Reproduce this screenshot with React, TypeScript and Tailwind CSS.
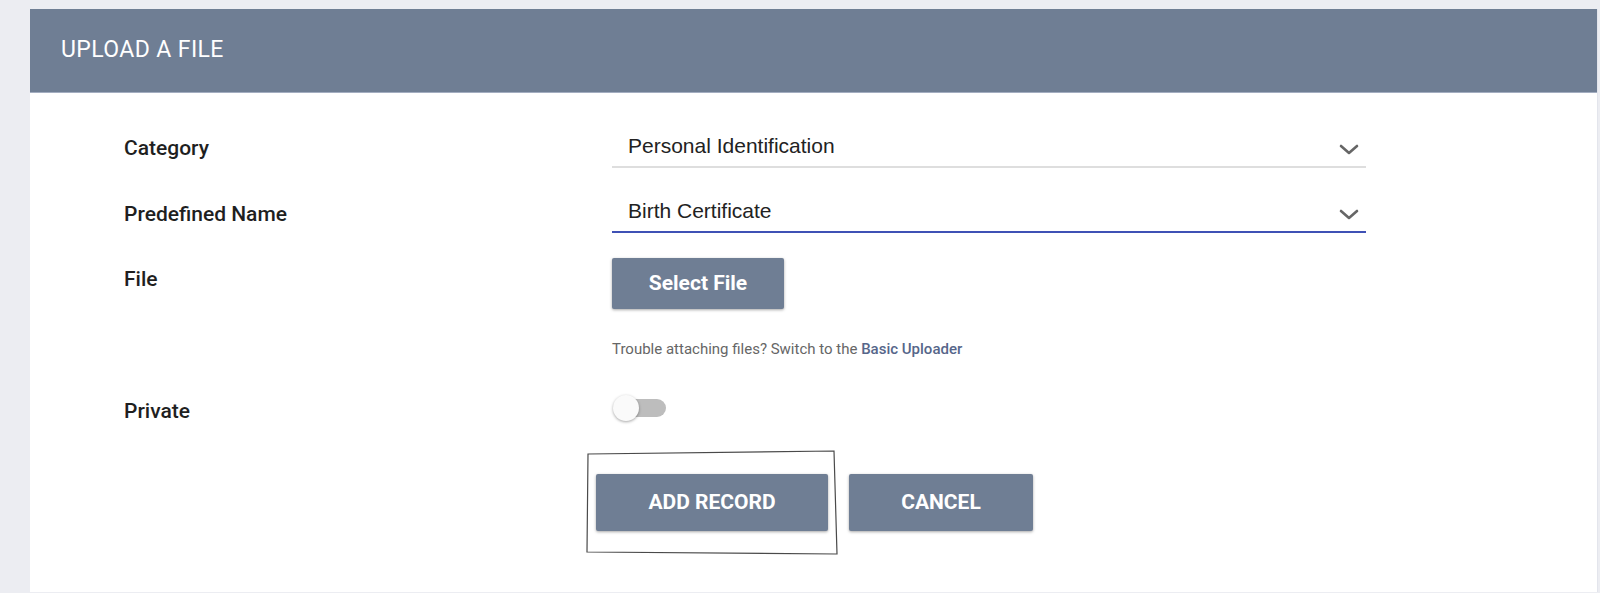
import React from "react";

function Chevron() {
  return (
    <svg width="20" height="11" viewBox="0 0 20 11" className="mt-[4px]">
      <polyline points="2,2 10,9 18,2" fill="none" stroke="#666666" strokeWidth="2.6" strokeLinecap="round" strokeLinejoin="round" />
    </svg>
  );
}

export default function App() {
  const label = "w-[488px] shrink-0 text-[21px] leading-[24px] font-medium text-[#1f1f1f] font-['Roboto',sans-serif]";
  const btn = "bg-[#6f7e94] rounded-[2px] shadow-[0_1px_3px_rgba(0,0,0,0.35)] text-white text-[21px] font-bold font-['Roboto',sans-serif] flex items-center justify-center";
  const ddText = "text-[21px] leading-[24px] text-[#222] font-['Liberation_Sans',Arial,sans-serif] mb-[3px]";
  return (
    <div className="min-h-[593px] bg-[#ecedf2] pt-[9px] pl-[30px] pr-[2px]">
      <div className="bg-white h-[583px] border-r border-[#e3e5ec]">
        <div className="h-[84px] bg-[#6f7e94] border-b border-[#a3adc0] flex items-center pl-[31px]">
          <span className="text-white text-[23px] font-['Roboto',sans-serif] tracking-[0.4px]">UPLOAD A FILE</span>
        </div>
        <div className="pl-[94px] pt-[35px]">
          <div className="flex items-start">
            <div className={label + " pt-[8px]"}>Category</div>
            <div className="w-[754px] h-[40px] border-b-2 border-[#dedede] flex items-center justify-between pl-[16px] pr-[7px]">
              <span className={ddText}>Personal Identification</span>
              <Chevron />
            </div>
          </div>
          <div className="flex items-start mt-[25px]">
            <div className={label + " pt-[9px]"}>Predefined Name</div>
            <div className="w-[754px] h-[40px] border-b-2 border-[#3f51b5] flex items-center justify-between pl-[16px] pr-[7px]">
              <span className={ddText}>Birth Certificate</span>
              <Chevron />
            </div>
          </div>
          <div className="flex items-start mt-[25px]">
            <div className={label + " pt-[9px]"}>File</div>
            <div className="flex flex-col">
              <div className={btn + " w-[172px] h-[51px]"}>Select File</div>
              <div className="mt-[30px] text-[15px] leading-[20px] text-[#666] font-['Roboto',sans-serif]">
                Trouble attaching files? Switch to the <span className="text-[#56668a] font-medium">Basic Uploader</span>
              </div>
            </div>
          </div>
          <div className="flex items-start mt-[35px] h-[28px]">
            <div className={label + " pt-[5px]"}>Private</div>
            <div className="relative w-[56px] h-[28px]">
              <div className="absolute left-[5px] top-[5px] w-[49px] h-[18px] rounded-full bg-[#bdbdbd]" />
              <div className="absolute left-[1px] top-[1px] w-[26px] h-[26px] rounded-full bg-[#fafafa] shadow-[0_1px_3px_rgba(0,0,0,0.35)]" />
            </div>
          </div>
          <div className="relative flex gap-[21px] mt-[52px] pl-[472px]">
            <div className={btn + " w-[232px] h-[57px]"}>ADD RECORD</div>
            <div className={btn + " w-[184px] h-[57px]"}>CANCEL</div>
            <svg className="absolute left-[460px] top-[-26px]" width="256" height="110" viewBox="0 0 256 110">
              <polygon points="4,6 250,3 253,106 3,104" fill="none" stroke="#4a4a4a" strokeWidth="1.2" />
            </svg>
          </div>
        </div>
      </div>
    </div>
  );
}
